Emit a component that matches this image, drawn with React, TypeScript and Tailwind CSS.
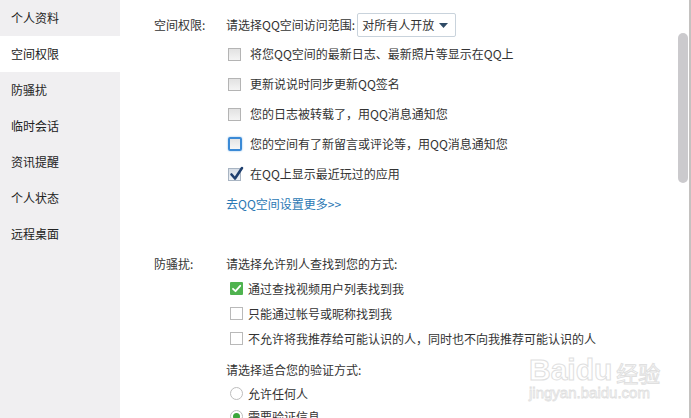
import React from "react";

const font = { fontFamily: '"Noto Sans CJK SC", "Noto Sans", sans-serif' };

function Box1({ state }: { state: "off" | "focus" | "on" }) {
  if (state === "focus")
    return (
      <span className="inline-block w-[14px] h-[14px] rounded-[2px] border-[2px] border-[#3b8ad6] bg-gradient-to-b from-[#e4e4e4] to-[#f6f6f6] shadow-[0_0_2px_#7fb6ea]" />
    );
  if (state === "on")
    return (
      <span className="relative inline-block w-[13px] h-[13px] border border-[#a8b4c2] bg-gradient-to-b from-[#d6dde6] to-[#eef1f5]">
        <svg className="absolute left-[0px] top-[-3px]" width="15" height="15" viewBox="0 0 15 15">
          <path d="M2.5 8.5 L6 12.5 L13 2" fill="none" stroke="#1f3f6e" strokeWidth="2.6" strokeLinecap="round" strokeLinejoin="round" />
        </svg>
      </span>
    );
  return (
    <span className="inline-block w-[13px] h-[13px] border border-[#b4b4b4] bg-gradient-to-b from-[#e2e2e2] to-[#f4f4f4]" />
  );
}

function Box2({ on }: { on?: boolean }) {
  if (on)
    return (
      <span className="flex items-center justify-center w-[13px] h-[13px] rounded-[1px] bg-[#4fb34f]">
        <svg width="11" height="11" viewBox="0 0 11 11">
          <path d="M2 5.8 L4.5 8.2 L9.2 2.8" fill="none" stroke="#fff" strokeWidth="1.8" strokeLinecap="round" strokeLinejoin="round" />
        </svg>
      </span>
    );
  return <span className="inline-block w-[13px] h-[13px] border border-[#b9b9b9] bg-white" />;
}

function Radio({ on }: { on?: boolean }) {
  return (
    <span className="flex items-center justify-center w-[13px] h-[13px] rounded-full border border-[#bdbdbd] bg-white">
      {on && <span className="w-[7px] h-[7px] rounded-full bg-[#3aa63a]" />}
    </span>
  );
}

const navItems = ["个人资料", "空间权限", "防骚扰", "临时会话", "资讯提醒", "个人状态", "远程桌面"];

export default function App() {
  const rows1: { t: string; s: "off" | "focus" | "on" }[] = [
    { t: "将您QQ空间的最新日志、最新照片等显示在QQ上", s: "off" },
    { t: "更新说说时同步更新QQ签名", s: "off" },
    { t: "您的日志被转载了，用QQ消息通知您", s: "off" },
    { t: "您的空间有了新留言或评论等，用QQ消息通知您", s: "focus" },
    { t: "在QQ上显示最近玩过的应用", s: "on" },
  ];
  const rows2 = [
    { t: "通过查找视频用户列表找到我", on: true },
    { t: "只能通过帐号或昵称找到我", on: false },
    { t: "不允许将我推荐给可能认识的人，同时也不向我推荐可能认识的人", on: false },
  ];
  return (
    <div className="relative flex w-[691px] h-[418px] overflow-hidden bg-white text-[12px] text-[#333]" style={font}>
      {/* sidebar */}
      <div className="w-[120px] shrink-0 bg-[#f0eff1] flex flex-col">
        {navItems.map((n, i) => (
          <div
            key={n}
            className={`h-[36px] flex items-center pl-[11px] text-[12px] text-[#222] ${i === 1 ? "bg-white" : ""}`}
          >
            {n}
          </div>
        ))}
      </div>

      {/* content */}
      <div className="flex-1 pl-[34px] pt-[13px]">
        {/* section 1 */}
        <div className="flex">
          <div className="w-[72px] h-[24px] flex items-center">空间权限:</div>
          <div className="flex flex-col">
            <div className="h-[24px] flex items-center">
              <span>请选择QQ空间访问范围:</span>
              <div className="ml-[2px] w-[99px] h-[24px] border border-[#c9d3dc] rounded-[2px] flex items-center pl-[4px] pr-[7px] justify-between bg-white">
                <span>对所有人开放</span>
                <svg width="9" height="5" viewBox="0 0 9 5">
                  <path d="M0 0 H9 L4.5 5 Z" fill="#2f4b66" />
                </svg>
              </div>
            </div>
            <div className="mt-[2px] flex flex-col">
              {rows1.map((r) => (
                <div key={r.t} className="h-[30px] flex items-center">
                  <span className="w-[24px] flex pl-[2px]">
                    <Box1 state={r.s} />
                  </span>
                  <span>{r.t}</span>
                </div>
              ))}
              <div className="h-[30px] flex items-center text-[#2b78b4]">去QQ空间设置更多&gt;&gt;</div>
            </div>
          </div>
        </div>

        {/* section 2 */}
        <div className="flex mt-[33px]">
          <div className="w-[72px] h-[24px] flex items-center">防骚扰:</div>
          <div className="flex flex-col">
            <div className="h-[24px] flex items-center">请选择允许别人查找到您的方式:</div>
            {rows2.map((r) => (
              <div key={r.t} className="h-[25px] flex items-center pl-[4px]">
                <span className="w-[18px] flex">
                  <Box2 on={r.on} />
                </span>
                <span>{r.t}</span>
              </div>
            ))}
            <div className="h-[31px] flex items-center pt-[6px]">请选择适合您的验证方式:</div>
            <div className="h-[23px] flex items-center pl-[4px]">
              <span className="w-[18px] flex">
                <Radio />
              </span>
              <span>允许任何人</span>
            </div>
            <div className="h-[23px] flex items-center pl-[4px]">
              <span className="w-[18px] flex">
                <Radio on />
              </span>
              <span>需要验证信息</span>
            </div>
          </div>
        </div>
      </div>

      {/* scrollbar */}
      <div className="absolute left-[678px] top-[33px] w-[10px] h-[150px] rounded-full bg-[#cbcacd]" />
      <div className="absolute right-0 top-0 w-[2px] h-full bg-[#c4c2c0]" />

      {/* watermark */}
      <div className="absolute left-[529px] top-[355px] flex flex-col items-start pointer-events-none select-none">
        <div className="flex items-end">
          <span className="text-[30px] leading-[30px] font-bold text-white [-webkit-text-stroke:1px_#e0e0e0]" style={{ fontFamily: '"Liberation Sans", sans-serif' }}>
            Baidu
          </span>
          <span className="ml-[4px] text-[22px] leading-[26px] text-white [-webkit-text-stroke:1px_#e0e0e0]">经验</span>
        </div>
        <span className="text-[15px] leading-[16px] text-white [-webkit-text-stroke:0.8px_#e0e0e0]" style={{ fontFamily: '"Liberation Sans", sans-serif' }}>
          jingyan.baidu.com
        </span>
      </div>
    </div>
  );
}
